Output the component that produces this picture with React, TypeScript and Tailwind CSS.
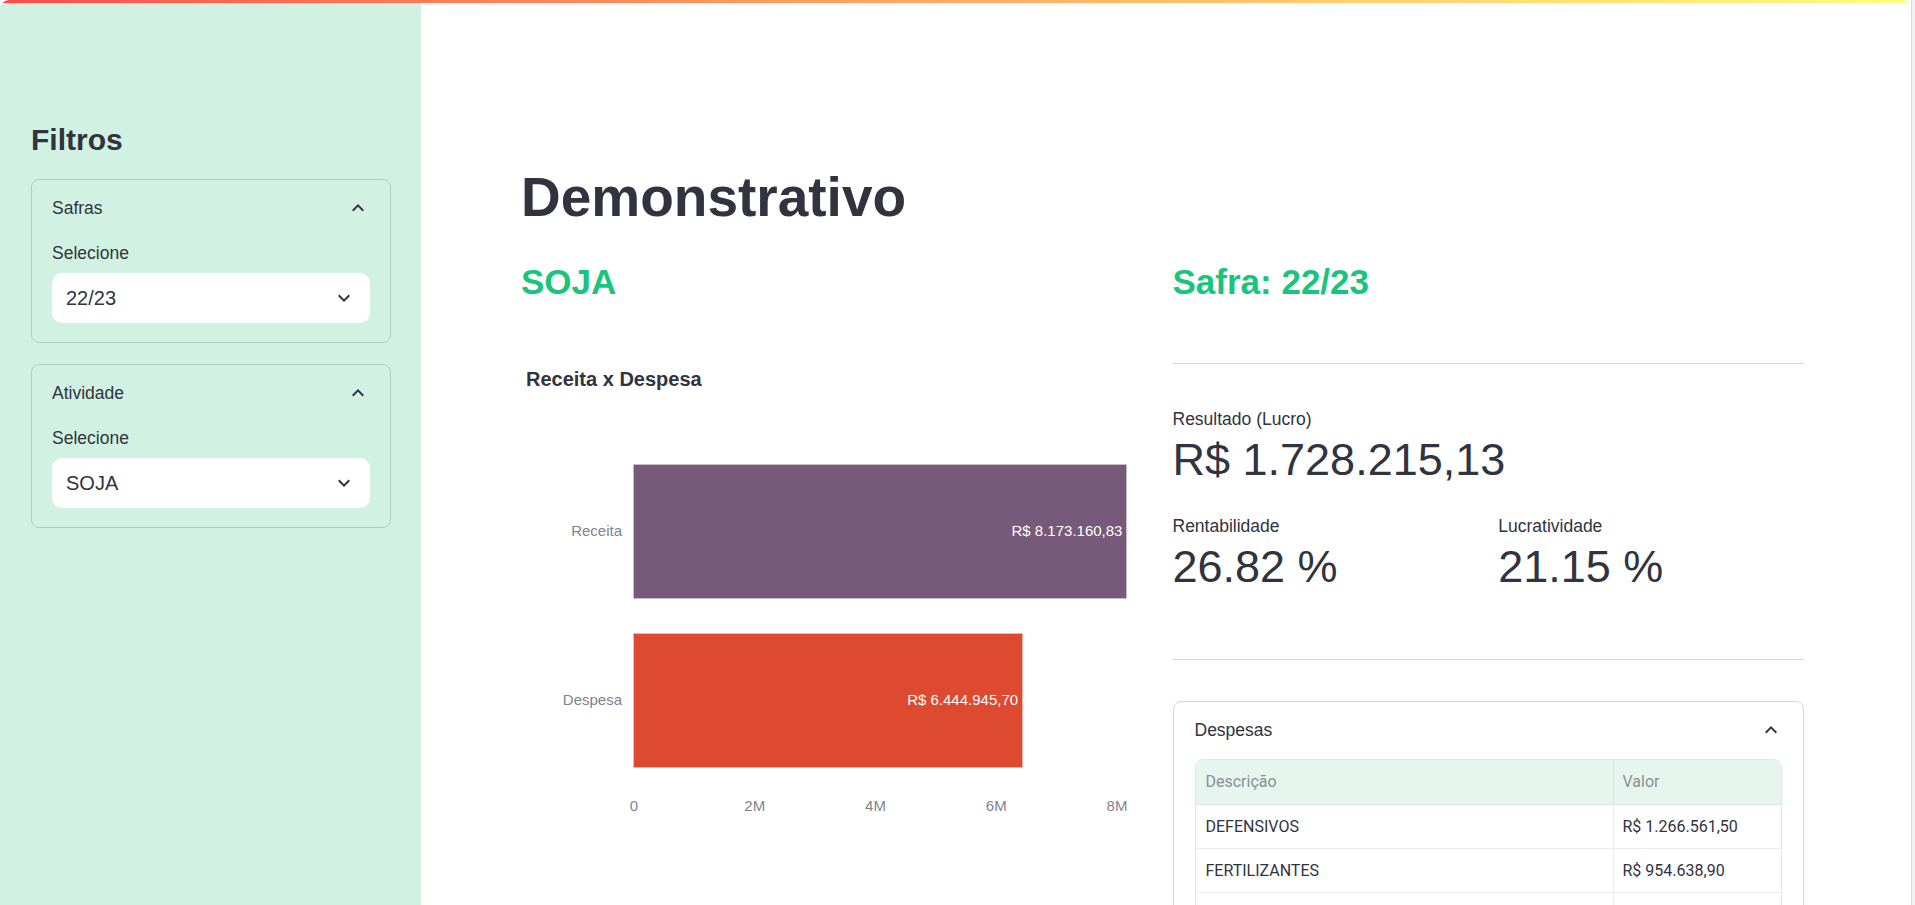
import React from 'react'

const ChevronUp = ({ className = '' }: { className?: string }) => (
  <svg viewBox="0 0 24 24" className={className} fill="currentColor">
    <path d="M12 8l-6 6 1.41 1.41L12 10.83l4.59 4.58L18 14z" />
  </svg>
)

const ChevronDown = ({ className = '' }: { className?: string }) => (
  <svg viewBox="0 0 24 24" className={className} fill="currentColor">
    <path d="M16.59 8.59L12 13.17 7.41 8.59 6 10l6 6 6-6z" />
  </svg>
)

function FilterBox({ title, value }: { title: string; value: string }) {
  return (
    <div className="border border-[#b1ccc1] rounded-[8px] px-[20px] pt-[16px] pb-[19px]">
      <div className="flex items-center justify-between h-[24px] text-[17.5px]">
        <span>{title}</span>
        <ChevronUp className="w-[24px] h-[24px] text-[#31333f]" />
      </div>
      <div className="mt-[22px] leading-[22px] text-[17.5px]">Selecione</div>
      <div className="mt-[9px] h-[50px] rounded-[10px] bg-white flex items-center justify-between pl-[14px] pr-[14px]">
        <span className="text-[20px]">{value}</span>
        <ChevronDown className="w-[24px] h-[24px] text-[#31333f]" />
      </div>
    </div>
  )
}

const MAX = 8000000
const AXIS = 483

export default function App() {
  const bars = [
    { label: 'Receita', value: 8173160.83, text: 'R$ 8.173.160,83', color: 'bg-[#775a79]' },
    { label: 'Despesa', value: 6444945.7, text: 'R$ 6.444.945,70', color: 'bg-[#de4a2f]' },
  ]
  const ticks = ['0', '2M', '4M', '6M', '8M']

  const rows = [
    { desc: 'DEFENSIVOS', valor: 'R$ 1.266.561,50' },
    { desc: 'FERTILIZANTES', valor: 'R$ 954.638,90' },
    { desc: '', valor: '' },
  ]

  return (
    <div className="w-[1915px] h-[905px] overflow-hidden flex bg-white text-[#31333f] font-['Liberation_Sans',Arial,sans-serif]">
      <div className="relative flex-1 flex rounded-t-[9px] overflow-hidden">
        {/* decoration */}
        <div className="absolute top-0 left-0 right-0 h-[3px] bg-linear-to-r from-[#ff4b4b] to-[#fffd80]"></div>

        {/* sidebar */}
        <aside className="w-[421px] h-full bg-[#d1f2e2] pt-[122px] pl-[31px] pr-[30px] flex flex-col">
          <h2 className="text-[30px] leading-[36px] font-bold">Filtros</h2>
          <div className="mt-[21px] flex flex-col gap-[21px]">
            <FilterBox title="Safras" value="22/23" />
            <FilterBox title="Atividade" value="SOJA" />
          </div>
        </aside>

        {/* main */}
        <main className="flex-1 h-full pl-[100px] pr-[107px] pt-[165px]">
          <h1 className="text-[55px] leading-[65px] font-bold">Demonstrativo</h1>

          <div className="mt-[31px] grid grid-cols-2 gap-[20px]">
            {/* left column */}
            <div>
              <h3 className="text-[35px] leading-[42px] font-bold text-[#1bc47d]">SOJA</h3>

              <div className="mt-[64px]">
                <div className="pl-[5px] text-[20px] leading-[24px] font-bold">Receita x Despesa</div>

                <div className="mt-[73px] flex flex-col gap-[34px]">
                  {bars.map((bar) => (
                    <div key={bar.label} className="flex items-center h-[135px]">
                      <div className="w-[101px] text-right text-[15px] text-[#7f838c]">{bar.label}</div>
                      <div className="ml-[11px] h-full flex-1">
                        <div
                          className={`h-full ${bar.color} border border-white/60 flex items-center justify-end pr-[4px] text-white text-[15px]`}
                          style={{ width: (bar.value / MAX) * AXIS + 1 }}
                        >
                          {bar.text}
                        </div>
                      </div>
                    </div>
                  ))}
                </div>

                <div className="relative ml-[112px] mt-[29px] h-[18px] text-[15px] leading-[18px] text-[#7f838c]">
                  {ticks.map((t, i) => (
                    <span
                      key={t}
                      className="absolute top-0 -translate-x-1/2"
                      style={{ left: (i * AXIS) / 4 + 1 }}
                    >
                      {t}
                    </span>
                  ))}
                </div>
              </div>
            </div>

            {/* right column */}
            <div>
              <h3 className="text-[35px] leading-[42px] font-bold text-[#1bc47d]">Safra: 22/23</h3>
              <div className="mt-[60px] h-px bg-[#d6d6d9]"></div>

              <div className="mt-[44px]">
                <div className="text-[17.5px] leading-[22px]">Resultado (Lucro)</div>
                <div className="mt-[3px] text-[45px] leading-[54px]">R$ 1.728.215,13</div>
              </div>

              <div className="mt-[28px] grid grid-cols-2 gap-[20px]">
                <div>
                  <div className="text-[17.5px] leading-[22px]">Rentabilidade</div>
                  <div className="mt-[3px] text-[45px] leading-[54px]">26.82 %</div>
                </div>
                <div>
                  <div className="text-[17.5px] leading-[22px]">Lucratividade</div>
                  <div className="mt-[3px] text-[45px] leading-[54px]">21.15 %</div>
                </div>
              </div>

              <div className="mt-[65px] h-px bg-[#d6d6d9]"></div>

              <div className="mt-[41px] border border-[#d6d6d9] rounded-[8px] pt-[16px] px-[21px] pb-[20px]">
                <div className="flex items-center justify-between h-[24px] text-[17.5px]">
                  <span>Despesas</span>
                  <ChevronUp className="w-[24px] h-[24px] text-[#31333f] -mr-[1px]" />
                </div>

                <div className="mt-[17px] border border-[#e3e6e4] rounded-t-[8px] overflow-hidden font-['Roboto',sans-serif] text-[16px]">
                  <div className="flex h-[45px] bg-[#e6f6ee] text-[#8a8e94] border-b border-[#dfe3e1]">
                    <div className="w-[418px] pl-[10px] flex items-center border-r border-[#d9e6df]">Descrição</div>
                    <div className="flex-1 pl-[9px] flex items-center">Valor</div>
                  </div>
                  {rows.map((r, i) => (
                    <div key={i} className="flex h-[44px] border-b border-[#ebebeb] text-[#31333f]">
                      <div className="w-[418px] pl-[10px] flex items-center border-r border-[#ebebeb]">{r.desc}</div>
                      <div className="flex-1 pl-[9px] flex items-center">{r.valor}</div>
                    </div>
                  ))}
                </div>
              </div>
            </div>
          </div>
        </main>
      </div>
      <div className="w-[4px] h-full bg-[#f2f2f2] border-l border-[#dcdcdc]"></div>
    </div>
  )
}
